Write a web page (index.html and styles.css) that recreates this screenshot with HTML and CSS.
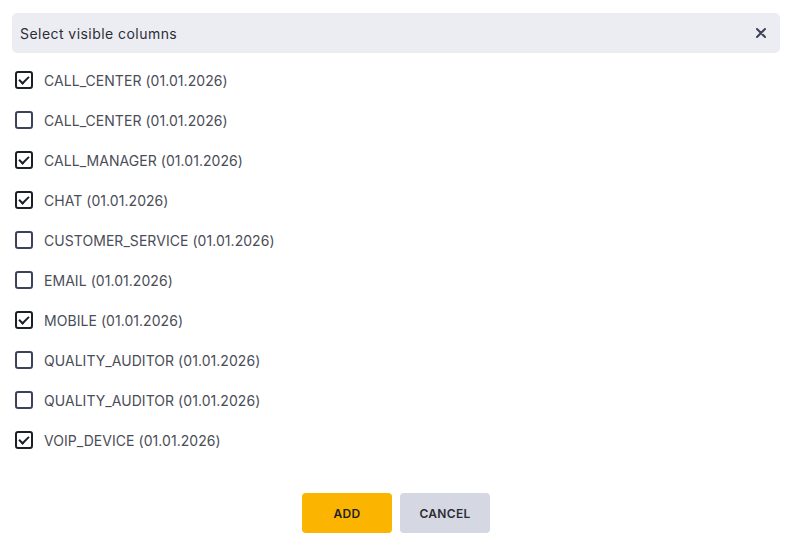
FILE: index.html
```html
<!DOCTYPE html>
<html lang="en">
<head>
<meta charset="UTF-8">
<meta name="viewport" content="width=device-width, initial-scale=1.0">
<title>Select visible columns</title>
<link rel="stylesheet" href="styles.css">
</head>
<body>
<div id="columnPicker">
    <div class="picker-header">
        <span>Select visible columns</span>
        <button class="close-btn" type="button" aria-label="Close">
            <svg width="10" height="10" viewBox="0 0 10 10"><path d="M1 1L9 9M9 1L1 9" stroke="#3d4258" stroke-width="2" stroke-linecap="round"/></svg>
        </button>
    </div>
    <ul class="column-list">
        <li><label><input type="checkbox" checked><span>CALL_CENTER (01.01.2026)</span></label></li>
        <li><label><input type="checkbox"><span>CALL_CENTER (01.01.2026)</span></label></li>
        <li><label><input type="checkbox" checked><span>CALL_MANAGER (01.01.2026)</span></label></li>
        <li><label><input type="checkbox" checked><span>CHAT (01.01.2026)</span></label></li>
        <li><label><input type="checkbox"><span>CUSTOMER_SERVICE (01.01.2026)</span></label></li>
        <li><label><input type="checkbox"><span>EMAIL (01.01.2026)</span></label></li>
        <li><label><input type="checkbox" checked><span>MOBILE (01.01.2026)</span></label></li>
        <li><label><input type="checkbox"><span>QUALITY_AUDITOR (01.01.2026)</span></label></li>
        <li><label><input type="checkbox"><span>QUALITY_AUDITOR (01.01.2026)</span></label></li>
        <li><label><input type="checkbox" checked><span>VOIP_DEVICE (01.01.2026)</span></label></li>
    </ul>
    <div class="actions">
        <button type="button" class="btn btn-add">ADD</button>
        <button type="button" class="btn btn-cancel">CANCEL</button>
    </div>
</div>
</body>
</html>
```

FILE: styles.css
```css
body {
    font-family: Inter, "Open Sans", sans-serif;
    background-color: #fff;
    margin: 0;
    color: #333;
}

#columnPicker {
    padding: 13px 13px 0 12px;
}

.picker-header {
    display: flex;
    justify-content: space-between;
    align-items: center;
    height: 40px;
    padding: 0 12px 0 8px;
    background-color: #ecedf3;
    border-radius: 5px;
    font-size: 14px;
    letter-spacing: 0.45px;
    color: #2b2d36;
}

.close-btn {
    background: none;
    border: none;
    padding: 0;
    width: 14px;
    height: 14px;
    display: flex;
    align-items: center;
    justify-content: center;
    cursor: pointer;
}

.column-list {
    list-style: none;
    margin: 7px 0 0;
    padding: 0;
}

.column-list li {
    height: 40px;
    display: flex;
    align-items: center;
}

.column-list label {
    display: flex;
    align-items: center;
    gap: 11px;
    padding-left: 3px;
    font-size: 14px;
    color: #4a4d57;
    letter-spacing: 0.05px;
    cursor: pointer;
}

.column-list input[type="checkbox"] {
    appearance: none;
    width: 18px;
    height: 18px;
    margin: 0;
    border: 2px solid #3d4258;
    border-radius: 3px;
    box-sizing: border-box;
    display: grid;
    place-items: center;
}

.column-list input[type="checkbox"]:checked {
    border-color: #1d1f26;
}

.column-list input[type="checkbox"]:checked::after {
    content: "";
    width: 4px;
    height: 8px;
    border: solid #1d1f26;
    border-width: 0 2px 2px 0;
    transform: translate(0, -1px) rotate(45deg);
}

.actions {
    display: flex;
    justify-content: center;
    gap: 8px;
    margin-top: 33px;
}

.btn {
    width: 90px;
    height: 40px;
    border: none;
    border-radius: 4px;
    font-family: inherit;
    font-size: 12px;
    font-weight: 600;
    letter-spacing: 0.3px;
    cursor: pointer;
}

.btn-add {
    background-color: #fbb500;
    color: #1d1f26;
}

.btn-cancel {
    background-color: #d5d8e2;
    color: #2b2d36;
}
```
